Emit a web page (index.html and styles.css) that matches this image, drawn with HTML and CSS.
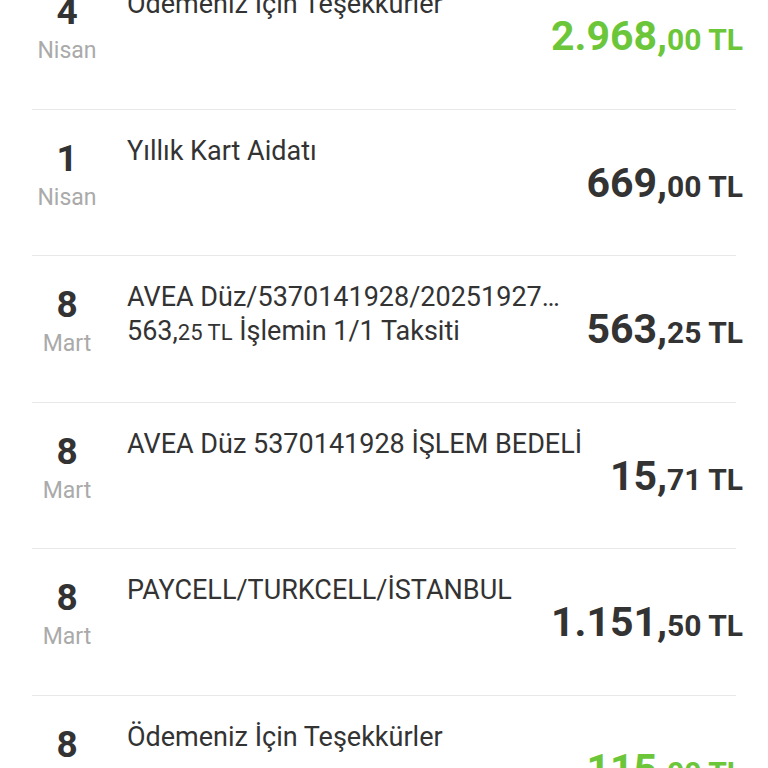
FILE: index.html
```html
<!DOCTYPE html>
<html lang="tr">
<head>
    <meta charset="UTF-8">
    <meta name="viewport" content="width=device-width, initial-scale=1.0">
    <title>Hesap Hareketleri</title>
    <link rel="stylesheet" href="styles.css">
</head>
<body>
    <ul class="tx-list">
        <li class="tx">
            <div class="tx-date"><span class="day">4</span><span class="month">Nisan</span></div>
            <div class="tx-info"><span class="title">Ödemeniz İçin Teşekkürler</span></div>
            <div class="amount paid">2.968,<small>00 TL</small></div>
        </li>
        <li class="tx">
            <div class="tx-date"><span class="day">1</span><span class="month">Nisan</span></div>
            <div class="tx-info"><span class="title">Yıllık Kart Aidatı</span></div>
            <div class="amount">669,<small>00 TL</small></div>
        </li>
        <li class="tx">
            <div class="tx-date"><span class="day">8</span><span class="month">Mart</span></div>
            <div class="tx-info">
                <span class="title">AVEA Düz/5370141928/2025192712345</span>
                <span class="sub">563,<small>25 TL</small> İşlemin 1/1 Taksiti</span>
            </div>
            <div class="amount">563,<small>25 TL</small></div>
        </li>
        <li class="tx">
            <div class="tx-date"><span class="day">8</span><span class="month">Mart</span></div>
            <div class="tx-info"><span class="title">AVEA Düz 5370141928 İŞLEM BEDELİ</span></div>
            <div class="amount">15,<small>71 TL</small></div>
        </li>
        <li class="tx">
            <div class="tx-date"><span class="day">8</span><span class="month">Mart</span></div>
            <div class="tx-info"><span class="title">PAYCELL/TURKCELL/İSTANBUL</span></div>
            <div class="amount">1.151,<small>50 TL</small></div>
        </li>
        <li class="tx">
            <div class="tx-date"><span class="day">8</span><span class="month">Mart</span></div>
            <div class="tx-info"><span class="title">Ödemeniz İçin Teşekkürler</span></div>
            <div class="amount paid">115,<small>00 TL</small></div>
        </li>
    </ul>
</body>
</html>
```

FILE: styles.css
```css
body {
    margin: 0;
    background: #fff;
    font-family: Roboto, "Noto Sans", sans-serif;
    color: #333;
    overflow: hidden;
}

.tx-list {
    list-style: none;
    margin: -37px 0 0;
    padding: 0 32px;
}

.tx {
    display: flex;
    align-items: flex-start;
    height: 145.5px;
    border-bottom: 1px solid #e8e8e8;
}

.tx-date {
    width: 70px;
    flex-shrink: 0;
    margin-right: 25px;
    display: flex;
    flex-direction: column;
    align-items: center;
    padding-top: 29px;
}

.day {
    font-size: 37px;
    font-weight: 700;
    line-height: 40px;
}

.month {
    font-size: 23px;
    line-height: 38px;
    color: #aaa;
}

.tx-info {
    flex: 1;
    min-width: 0;
    display: flex;
    flex-direction: column;
    padding-top: 24px;
}

.title, .sub {
    font-size: 27px;
    line-height: 34px;
    white-space: nowrap;
    overflow: hidden;
    text-overflow: ellipsis;
}

.sub small {
    font-size: 22px;
}

.amount {
    flex-shrink: 0;
    margin-left: 18px;
    margin-right: -7px;
    padding-top: 48px;
    font-size: 41px;
    font-weight: 700;
    line-height: 50px;
    white-space: nowrap;
}

.amount small {
    font-size: 30px;
}

.amount.paid {
    color: #6cc63a;
}
```
